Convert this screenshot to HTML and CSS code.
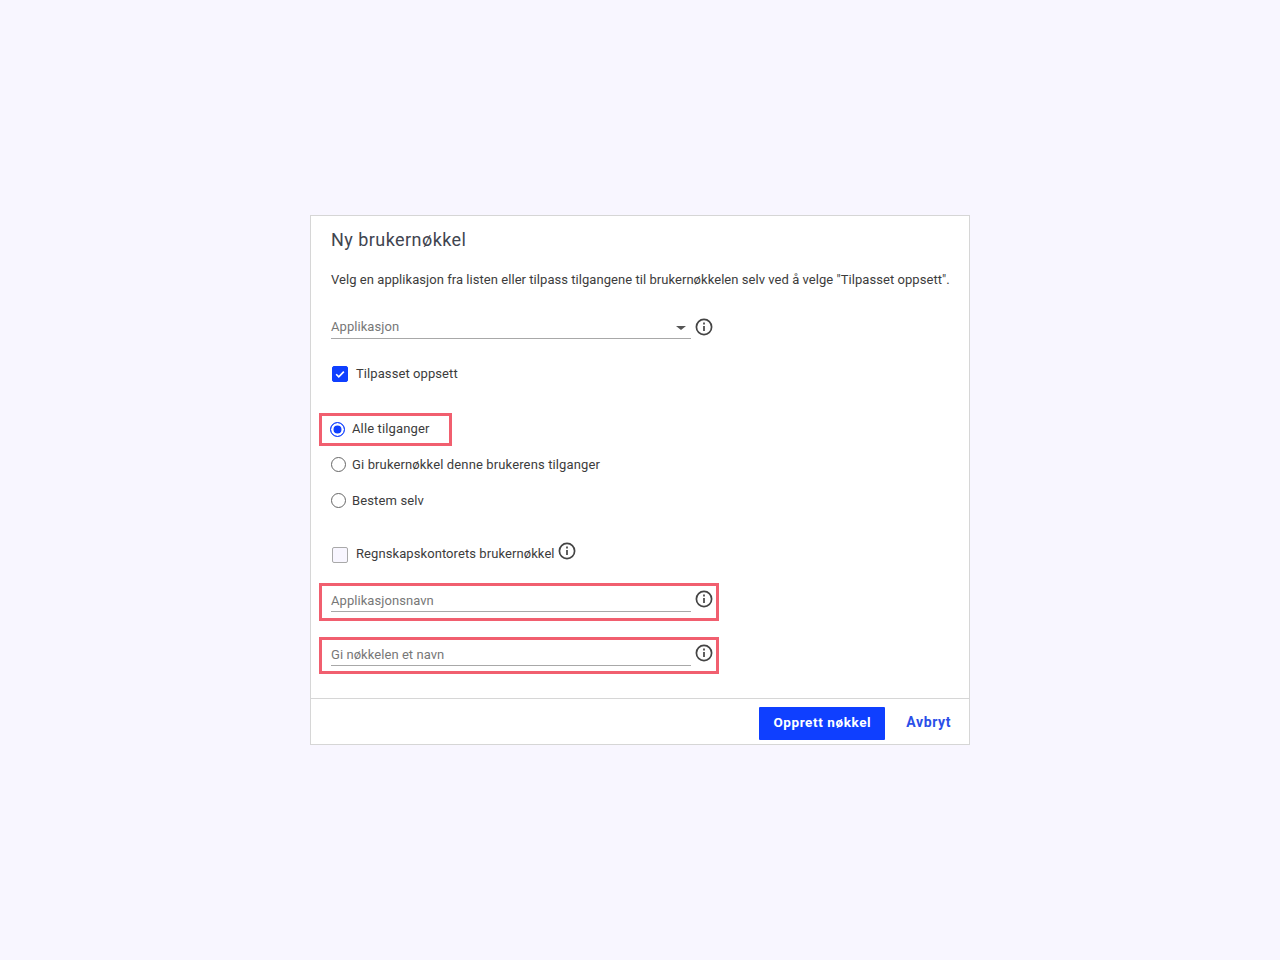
FILE: index.html
```html
<!DOCTYPE html>
<html lang="no">
<head>
    <meta charset="UTF-8">
    <title>Ny brukernøkkel</title>
    <link rel="stylesheet" href="styles.css">
</head>
<body>
    <div class="dialog">
        <div class="dialog-body">
            <h2 class="dialog-title">Ny brukernøkkel</h2>
            <p class="dialog-intro">Velg en applikasjon fra listen eller tilpass tilgangene til brukernøkkelen selv ved å velge "Tilpasset oppsett".</p>

            <div class="field select-row">
                <div class="field-line">
                    <span class="field-text">Applikasjon</span>
                    <span class="caret"></span>
                </div>
                <svg class="info" viewBox="0 0 18 18"><circle cx="9" cy="9" r="7.6"/><path d="M9 8v5"/><path d="M9 4.6v1.8"/></svg>
            </div>

            <div class="check-row check-first">
                <span class="check check-on">
                    <svg viewBox="0 0 16 16"><path d="M3.6 8.3l3 2.9L12.4 5.2"/></svg>
                </span>
                <span class="check-label">Tilpasset oppsett</span>
            </div>

            <div class="radio-row mark mark-radio">
                <span class="radio radio-on"></span>
                <span class="radio-label">Alle tilganger</span>
            </div>
            <div class="radio-row radio-second">
                <span class="radio"></span>
                <span>Gi brukernøkkel denne brukerens tilganger</span>
            </div>
            <div class="radio-row radio-third">
                <span class="radio"></span>
                <span>Bestem selv</span>
            </div>

            <div class="check-row check-second">
                <span class="check"></span>
                <span class="check-label">Regnskapskontorets brukernøkkel</span>
                <svg class="info info-inline" viewBox="0 0 18 18"><circle cx="9" cy="9" r="7.6"/><path d="M9 8v5"/><path d="M9 4.6v1.8"/></svg>
            </div>

            <div class="field mark mark-field first-field">
                <div class="field-line">
                    <span class="field-text">Applikasjonsnavn</span>
                </div>
                <svg class="info" viewBox="0 0 18 18"><circle cx="9" cy="9" r="7.6"/><path d="M9 8v5"/><path d="M9 4.6v1.8"/></svg>
            </div>
            <div class="field mark mark-field second-field">
                <div class="field-line">
                    <span class="field-text">Gi nøkkelen et navn</span>
                </div>
                <svg class="info" viewBox="0 0 18 18"><circle cx="9" cy="9" r="7.6"/><path d="M9 8v5"/><path d="M9 4.6v1.8"/></svg>
            </div>
        </div>
        <div class="dialog-footer">
            <button class="btn-primary">Opprett nøkkel</button>
            <a class="btn-link">Avbryt</a>
        </div>
    </div>
</body>
</html>
```

FILE: styles.css
```css
* {
    box-sizing: border-box;
}
body {
    margin: 0;
    height: 960px;
    display: flex;
    justify-content: center;
    align-items: center;
    background-color: #f8f6ff;
    font-family: 'Roboto', sans-serif;
    font-size: 13px;
    letter-spacing: 0.13px;
    color: #3c3c3c;
}
.dialog {
    width: 660px;
    height: 530px;
    background-color: white;
    border: 1px solid #d6d6d6;
    display: flex;
    flex-direction: column;
}
.dialog-body {
    padding: 12px 20px 0;
    height: 482px;
}
.dialog-title {
    margin: 0;
    height: 24px;
    line-height: 24px;
    font-size: 18px;
    font-weight: 400;
    letter-spacing: 0.45px;
    color: #3f4550;
}
.dialog-intro {
    margin: 18px 0 0;
    height: 20px;
    line-height: 20px;
    white-space: nowrap;
    letter-spacing: 0.05px;
}
.field {
    display: flex;
    align-items: flex-start;
}
.field-line {
    width: 360px;
    display: flex;
    align-items: center;
    justify-content: space-between;
    border-bottom: 1px solid #a8a8a8;
}
.field-text {
    color: #777;
    letter-spacing: 0.06px;
}
.select-row {
    margin-top: 26px;
    height: 23px;
}
.select-row .field-line {
    height: 23px;
    padding-bottom: 2px;
}
.caret {
    width: 0;
    height: 0;
    margin: 4px 5px 0 0;
    border-left: 5px solid transparent;
    border-right: 5px solid transparent;
    border-top: 4px solid #555;
}
.info {
    width: 18px;
    height: 18px;
    margin-left: 4px;
    margin-top: 2px;
    fill: none;
    stroke: #444;
    stroke-width: 1.7;
}
.check-row {
    display: flex;
    align-items: center;
    height: 16px;
}
.check-first {
    margin-top: 27px;
    padding-left: 1px;
}
.check-second {
    margin-top: 37px;
    padding-left: 1px;
}
.check {
    width: 16px;
    height: 16px;
    margin-right: 8px;
    border: 1px solid #a9a9a9;
    border-radius: 2px;
    background-color: #f8f6ff;
}
.check-on {
    background-color: #0f3fff;
    border-color: #0f3fff;
}
.check svg {
    display: block;
    width: 14px;
    height: 14px;
    fill: none;
    stroke: white;
    stroke-width: 1.9;
}
.check-label {
    margin-bottom: 2px;
    letter-spacing: 0.08px;
}
.check-second .check-label {
    margin-bottom: 3px;
}
.info-inline {
    margin: -9px 0 0 3px;
}
.radio-row {
    display: flex;
    align-items: center;
    height: 20px;
}
.radio {
    width: 15px;
    height: 15px;
    margin-right: 6px;
    border: 1px solid #666;
    border-radius: 50%;
    background-color: white;
    flex-shrink: 0;
}
.radio-on {
    margin-right: 7px;
    border-color: #0f3fff;
    background-color: #0f3fff;
    box-shadow: inset 0 0 0 2.5px white;
}
.radio-label {
    margin-bottom: 2px;
}
.radio-second {
    margin-top: 8px;
}
.radio-third {
    margin-top: 16px;
}
.mark {
    margin-left: -12px;
    border: 3px solid #f15f6f;
    padding-left: 9px;
}
.mark-radio {
    width: 133px;
    height: 33px;
    margin-top: 31px;
    padding-left: 8px;
}
.mark-field {
    width: 400px;
    align-items: flex-start;
}
.mark-field .field-line {
    height: 26px;
    padding-top: 4px;
}
.first-field {
    margin-top: 20px;
    height: 38px;
}
.second-field {
    margin-top: 16px;
    height: 37px;
}
.mark-field .info {
    margin-top: 4px;
}
.dialog-footer {
    height: 46px;
    border-top: 1px solid #d6d6d6;
    display: flex;
    align-items: center;
    justify-content: flex-end;
    padding: 3px 18px 0 0;
}
.btn-primary {
    width: 126px;
    height: 33px;
    padding-bottom: 4px;
    border: none;
    border-radius: 1px;
    background-color: #0f3fff;
    color: white;
    font-family: 'Roboto', sans-serif;
    font-size: 13.5px;
    font-weight: 700;
    letter-spacing: 0.6px;
}
.btn-link {
    margin-left: 21px;
    margin-bottom: 2px;
    color: #2b4fe8;
    font-size: 14px;
    font-weight: 700;
    letter-spacing: 0.6px;
}
```
